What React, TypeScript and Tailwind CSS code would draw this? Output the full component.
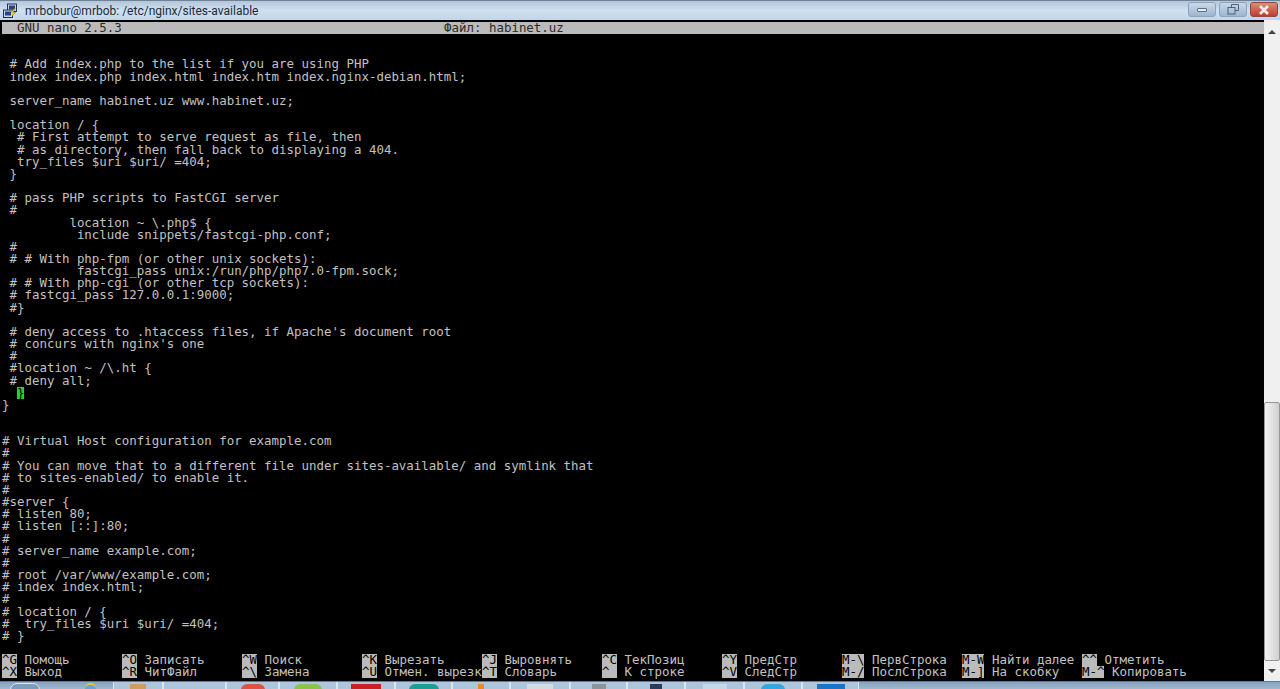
const LINES = [
  '',
  '',
  " # Add index.php to the list if you are using PHP",
  " index index.php index.html index.htm index.nginx-debian.html;",
  '',
  " server_name habinet.uz www.habinet.uz;",
  '',
  " location / {",
  "  # First attempt to serve request as file, then",
  "  # as directory, then fall back to displaying a 404.",
  "  try_files $uri $uri/ =404;",
  " }",
  '',
  " # pass PHP scripts to FastCGI server",
  " #",
  "         location ~ \\.php$ {",
  "          include snippets/fastcgi-php.conf;",
  " #",
  " # # With php-fpm (or other unix sockets):",
  "          fastcgi_pass unix:/run/php/php7.0-fpm.sock;",
  " # # With php-cgi (or other tcp sockets):",
  " # fastcgi_pass 127.0.0.1:9000;",
  " #}",
  '',
  " # deny access to .htaccess files, if Apache's document root",
  " # concurs with nginx's one",
  " #",
  " #location ~ /\\.ht {",
  " # deny all;",
  'CURSOR',
  "}",
  '',
  '',
  "# Virtual Host configuration for example.com",
  "#",
  "# You can move that to a different file under sites-available/ and symlink that",
  "# to sites-enabled/ to enable it.",
  "#",
  "#server {",
  "# listen 80;",
  "# listen [::]:80;",
  "#",
  "# server_name example.com;",
  "#",
  "# root /var/www/example.com;",
  "# index index.html;",
  "#",
  "# location / {",
  "#  try_files $uri $uri/ =404;",
  "# }",
  '',
]

const HELP: [string, string, string, string][] = [
  ['^G', 'Помощь', '^X', 'Выход'],
  ['^O', 'Записать', '^R', 'ЧитФайл'],
  ['^W', 'Поиск', '^\\', 'Замена'],
  ['^K', 'Вырезать', '^U', 'Отмен. вырезк'],
  ['^J', 'Выровнять', '^T', 'Словарь'],
  ['^C', 'ТекПозиц', '^_', 'К строке'],
  ['^Y', 'ПредСтр', '^V', 'СледСтр'],
  ['M-\\', 'ПервСтрока', 'M-/', 'ПослСтрока'],
  ['M-W', 'Найти далее', 'M-]', 'На скобку'],
  ['^^', 'Отметить', 'M-^', 'Копировать'],
]

function PuttyIcon() {
  return (
    <svg width="16" height="16" viewBox="0 0 16 16" aria-hidden="true">
      <rect x="5.5" y="1" width="9" height="7.5" fill="#c9d3e6" stroke="#26304f" />
      <rect x="7" y="2.5" width="6" height="4" fill="#26408c" />
      <rect x="1.5" y="7" width="9" height="7.5" fill="#c9d3e6" stroke="#26304f" />
      <rect x="3" y="8.5" width="6" height="4" fill="#26408c" />
      <path d="M9 9 L13 5 L11 10 L14 9 L10 13" fill="#f3d23c" stroke="#8a6a10" strokeWidth="0.5" />
    </svg>
  )
}

function TitleBar() {
  return (
    <div className="flex h-5 items-center border-t border-[#6f8296] bg-gradient-to-b from-[#b4c6da] via-[#cfe0f0] to-[#c1d6ea] pl-[2px] pr-[2px]">
      <PuttyIcon />
      <span className="ml-[7px] font-['Roboto'] text-[12px] text-[#1d2a38]">mrbobur@mrbob: /etc/nginx/sites-available</span>
      <div className="ml-auto mt-[1px] flex h-[15px] items-stretch gap-[3px] self-start">
        <button className="flex w-[28px] items-center justify-center rounded-[3px] border border-[#8ba3bb] bg-gradient-to-b from-[#c8d8e8] to-[#9db7d0]">
          <span className="h-[4px] w-[10px] rounded-[1px] border border-[#5c6f85] bg-[#e8eef4]" />
        </button>
        <button className="flex w-[28px] items-center justify-center rounded-[3px] border border-[#8ba3bb] bg-gradient-to-b from-[#c8d8e8] to-[#9db7d0]">
          <svg width="12" height="11" viewBox="0 0 12 11" aria-hidden="true">
            <path d="M4.5 3 V0.5 H11.5 V6.5 H8" fill="none" stroke="#4e5f73" />
            <rect x="1" y="3.5" width="7" height="6.5" fill="none" stroke="#4e5f73" />
          </svg>
        </button>
        <button className="flex w-[28px] items-center justify-center rounded-[3px] border border-[#8d4a40] bg-gradient-to-b from-[#de8a78] to-[#bd3c2c]">
          <svg width="12" height="10" viewBox="0 0 12 10" aria-hidden="true">
            <path d="M2 1 L10 9 M10 1 L2 9" stroke="#f4ece8" strokeWidth="2.6" />
          </svg>
        </button>
      </div>
    </div>
  )
}

function HelpRow({ row }: { row: 0 | 1 }) {
  return (
    <div className="flex h-[12.17px]">
      {HELP.map((h) => {
        const taste = row === 0 ? h[0] : h[2]
        const text = row === 0 ? h[1] : h[3]
        return (
          <div key={taste} className="w-[120px] shrink-0 whitespace-pre">
            <span className="inline-block h-[12.17px] bg-[#bbbbbb] align-top text-black">{taste}</span> {text}
          </div>
        )
      })}
    </div>
  )
}

function Terminal() {
  return (
    <div className="w-[1262px] font-['DejaVu_Sans_Mono'] text-[12.45px] leading-[12.17px] text-[#c2c2c2]">
      <div className="flex h-[12.17px] whitespace-pre bg-[#bbbbbb] text-[#2a2a2a]">
        <span className="w-[442px]">  GNU nano 2.5.3</span>
        <span>Файл: habinet.uz</span>
      </div>
      {LINES.map((l, i) =>
        l === 'CURSOR' ? (
          <div key={i} className="h-[12.17px] whitespace-pre">
            {'  '}
            <span className="inline-block h-[12.17px] w-[7.5px] bg-[#1fd81f] align-top text-black">{'}'}</span>
          </div>
        ) : (
          <div key={i} className="h-[12.17px] whitespace-pre">
            {l}
          </div>
        ),
      )}
      <HelpRow row={0} />
      <HelpRow row={1} />
    </div>
  )
}

function Scrollbar() {
  return (
    <div className="flex w-4 flex-col items-stretch bg-[#f0f0f0]">
      <div className="flex h-[17px] items-center justify-center pt-[6px]">
        <span className="h-0 w-0 border-x-[4px] border-b-[4px] border-x-transparent border-b-[#444444]" />
      </div>
      <div className="h-[365px]" />
      <div className="h-[259px] rounded-[2px] border border-[#979797] bg-gradient-to-r from-[#f2f2f2] via-[#e2e2e2] to-[#cfcfcf]" />
      <div className="flex flex-1 items-center justify-center">
        <span className="h-0 w-0 border-x-[4px] border-t-[4px] border-x-transparent border-t-[#444444]" />
      </div>
    </div>
  )
}

// Taskleiste: nur der obere Rand ist sichtbar
const TASKS = [
  { w: 'w-[50px]', tip: 'bg-[#c9a05c] w-[16px]', rund: false },
  { w: 'w-[63px]', tip: 'bg-[#a9c4dc] w-[2px]', rund: false },
  { w: 'w-[53px]', tip: 'bg-[#d9554a] w-[24px]', rund: true },
  { w: 'w-[58px]', tip: 'bg-[#8cc152] w-[28px]', rund: true },
  { w: 'w-[58px]', tip: 'bg-[#c8202a] w-[30px]', rund: false },
  { w: 'w-[57px]', tip: 'bg-[#1f9c94] w-[30px]', rund: true },
  { w: 'w-[58px]', tip: 'bg-[#e98a2a] w-[6px]', rund: false },
  { w: 'w-[60px]', tip: 'bg-[#d2dbe4] w-[26px]', rund: false },
  { w: 'w-[57px]', tip: 'bg-[#8c949c] w-[14px]', rund: false },
  { w: 'w-[58px]', tip: 'bg-[#2c3a5c] w-[12px]', rund: false },
  { w: 'w-[59px]', tip: 'bg-[#c4d8ea] w-[24px]', rund: false },
  { w: 'w-[58px]', tip: 'bg-[#35a7e0] w-[24px]', rund: true },
  { w: 'w-[57px]', tip: 'bg-[#1c74c8] w-[28px]', rund: false },
]

function Taskbar() {
  return (
    <div className="flex h-[8px] overflow-hidden border-t border-[#5f7a96] bg-gradient-to-b from-[#86a3bf] to-[#9fb8d0]">
      <div className="flex w-[113px] shrink-0 pl-[10px] pt-[1px]">
        <div className="h-[14px] w-[30px] rounded-full border border-[#dfe8f0] bg-[#7c9cbc]" />
        <div className="ml-[45px] h-[12px] w-[11px] rounded-full border-t-2 border-[#e8c53a] bg-[#6ba4d8]" />
      </div>
      {TASKS.map((t, i) => (
        <div key={i} className={`flex ${t.w} shrink-0 justify-center border-x border-[#dbe6f0] bg-[#aec6dc] pt-[2px]`}>
          <div className={`h-[12px] ${t.tip} ${t.rund ? 'rounded-full' : ''}`} />
        </div>
      ))}
    </div>
  )
}

export default function App() {
  return (
    <div className="flex h-[689px] w-[1280px] flex-col overflow-hidden bg-[#c1d6ea]">
      <TitleBar />
      <div className="flex h-[661px] bg-black pl-[2px]">
        <div className="flex-1 pt-[2px]">
          <Terminal />
        </div>
        <Scrollbar />
      </div>
      <Taskbar />
    </div>
  )
}
